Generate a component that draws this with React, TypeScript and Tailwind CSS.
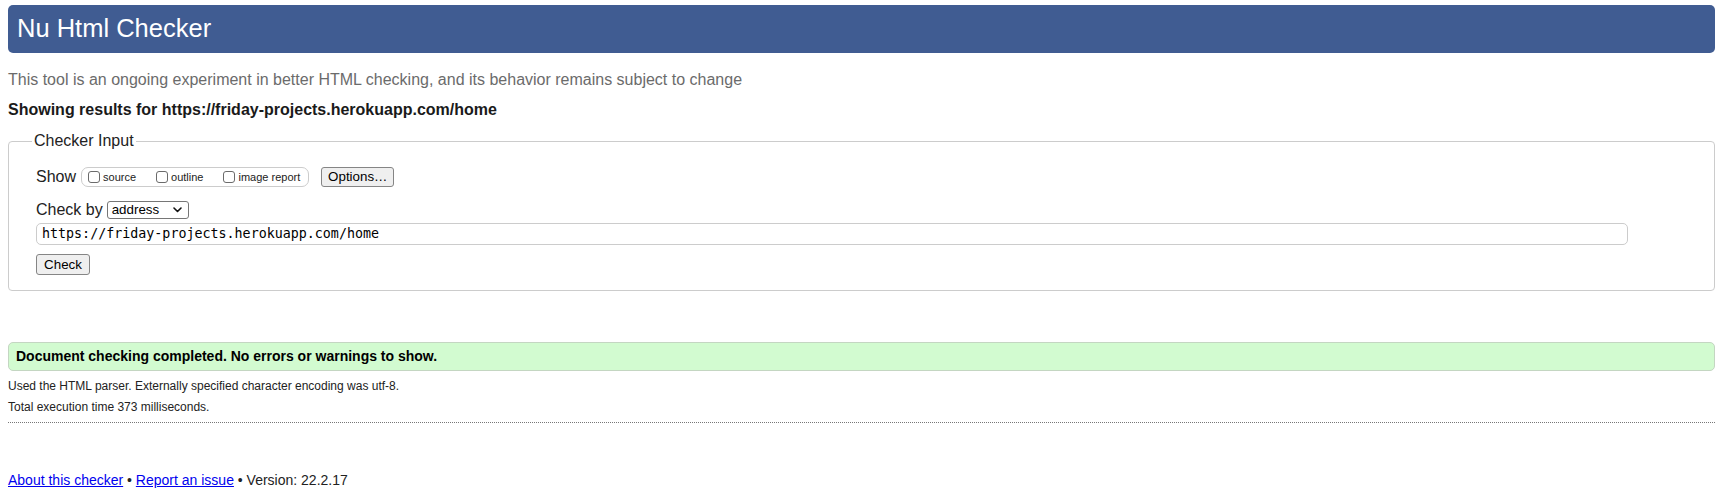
const sans = "font-['Liberation_Sans',Arial,Helvetica,sans-serif]";

function Box({ label }: { label: string }) {
  return (
    <span className="flex items-center">
      <span className="inline-block h-[12px] w-[12px] rounded-[3px] border border-[#6b6b6b] bg-white" />
      <span className="ml-[3px] text-[11px] leading-[13px] text-[#222]">{label}</span>
    </span>
  );
}

export default function App() {
  return (
    <div className={`min-h-[504px] bg-white pl-[8px] pr-[12px] pt-[5px] text-[#222] ${sans}`}>
      {/* Title bar */}
      <h1 className="flex h-[48px] items-center rounded-[5px] bg-[#405c92] pl-[9px] text-[25.5px] font-normal leading-none text-white">
        Nu Html Checker
      </h1>

      <p className="mt-[18px] text-[16px] leading-[18px] text-[#6b6b6b]">
        This tool is an ongoing experiment in better HTML checking, and its behavior remains subject to change
      </p>

      <p className="mt-[12px] text-[16px] font-bold leading-[18px] text-[#1a1a1a]">
        Showing results for https://friday-projects.herokuapp.com/home
      </p>

      {/* Checker input */}
      <fieldset className="mt-[13px] rounded-[4px] border border-[#cccccc] pb-[15px] pl-[23px] pt-[17px]">
        <legend className="px-[2px] text-[16px] leading-[18px] text-[#222]">Checker Input</legend>
        <div className="flex flex-col pl-[4px]">
          <div className="flex h-[20px] items-center">
            <span className="text-[16px] leading-[18px]">Show</span>
            <div className="ml-[5px] flex h-[20px] items-center gap-[20px] rounded-[7px] border border-[#cccccc] pl-[6px] pr-[8px]">
              <Box label="source" />
              <Box label="outline" />
              <Box label="image report" />
            </div>
            <button className="ml-[12px] flex h-[20px] w-[73px] items-center justify-center rounded-[3px] border border-[#858585] bg-[#efefef] text-[13.33px] leading-none text-black">
              Options…
            </button>
          </div>

          <div className="mt-[14px] flex h-[18px] items-center">
            <span className="text-[16px] leading-[18px]">Check by</span>
            <div className="ml-[4px] flex h-[18px] w-[82px] items-center justify-between rounded-[3px] border border-[#767676] bg-white pl-[4px] pr-[6px] text-[13.33px] leading-none text-black">
              <span>address</span>
              <svg width="9" height="6" viewBox="0 0 9 6" fill="none">
                <path d="M1 1l3.5 3.5L8 1" stroke="#111" strokeWidth="1.6" strokeLinecap="round" strokeLinejoin="round" />
              </svg>
            </div>
          </div>

          <div className="mt-[4px] flex h-[22px] w-[1592px] items-center rounded-[5px] border border-[#cccccc] pl-[5px] font-['DejaVu_Sans_Mono',monospace] text-[13.33px] leading-none text-black">
            https://friday-projects.herokuapp.com/home
          </div>

          <div className="mt-[9px]">
            <button className="flex h-[21px] w-[54px] items-center justify-center rounded-[3px] border border-[#858585] bg-[#efefef] text-[13.33px] leading-none text-black">
              Check
            </button>
          </div>
        </div>
      </fieldset>

      {/* Result */}
      <div className="mt-[51px] flex h-[29px] items-center rounded-[5px] border border-[#c4d6c2] bg-[#d2fbd0] pl-[7px] text-[14px] font-bold text-black">
        Document checking completed. No errors or warnings to show.
      </div>

      <p className="mt-[8px] text-[12px] leading-[14px] text-[#222]">
        Used the HTML parser. Externally specified character encoding was utf-8.
      </p>
      <p className="mt-[7px] text-[12px] leading-[14px] text-[#222]">Total execution time 373 milliseconds.</p>
      <div className="mt-[8px] border-t border-dotted border-[#777]" />

      {/* Footer */}
      <p className="mt-[49px] text-[14px] leading-[16px] text-[#222]">
        <a href="#" className="text-[#0000ee] underline">About this checker</a>
        {" • "}
        <a href="#" className="text-[#0000ee] underline">Report an issue</a>
        {" • Version: 22.2.17"}
      </p>
    </div>
  );
}
